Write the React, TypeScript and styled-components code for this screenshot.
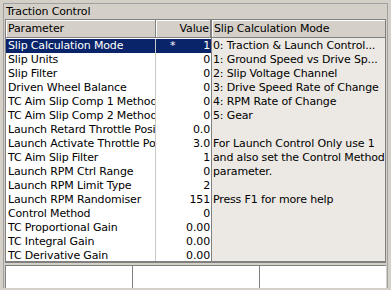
import styled, { createGlobalStyle } from 'styled-components'

const GlobalStyle = createGlobalStyle`
  html, body {
    margin: 0;
    padding: 0;
    background: #d4d0c8;
  }
  body {
    font-family: 'DejaVu Sans', Verdana, sans-serif;
    font-size: 11px;
    letter-spacing: -0.15px;
    color: #000;
  }
  * {
    box-sizing: border-box;
  }
`

const Window = styled.div`
  width: 391px;
  height: 290px;
  padding: 3px 3px 2px 3px;
  display: flex;
  overflow: hidden;
`

const Frame = styled.div`
  flex: 1;
  display: flex;
  flex-direction: column;
  border: 1px solid #a0a0a0;
  border-bottom: none;
  padding: 0 1px;
  min-width: 0;
`

const Title = styled.div`
  height: 15px;
  line-height: 15px;
  padding-left: 1px;
  white-space: nowrap;
`

const Main = styled.div`
  display: flex;
  height: 244px;
`

const ListPanel = styled.div`
  width: 206px;
  display: flex;
  flex-direction: column;
  border-top: 1px solid #808080;
  border-left: 1px solid #808080;
  border-bottom: 2px solid #808080;
  overflow: hidden;
`

const HeaderRow = styled.div`
  display: grid;
  grid-template-columns: 150px 55px;
  height: 18px;
  flex-shrink: 0;
`

const HeaderCell = styled.div<{ $align?: 'left' | 'right' }>`
  background: #d4d0c8;
  border-right: 1px solid #808080;
  border-bottom: 1px solid #808080;
  box-shadow: inset 1px 1px 0 #fff;
  line-height: 17px;
  padding: 0 ${({ $align }) => ($align === 'right' ? '1px' : '0')} 0 2px;
  text-align: ${({ $align }) => $align ?? 'left'};
  white-space: nowrap;
  overflow: hidden;
`

const ListBody = styled.div`
  flex: 1;
  background: #fff;
  padding-top: 1px;
  overflow: hidden;
`

const Row = styled.div<{ $selected?: boolean }>`
  display: grid;
  grid-template-columns: 150px 55px;
  height: 14px;
  line-height: 14px;
  background: ${({ $selected }) => ($selected ? '#0a246a' : 'transparent')};
  color: ${({ $selected }) => ($selected ? '#fff' : '#000')};
`

const NameCell = styled.div`
  padding-left: 2px;
  white-space: nowrap;
  overflow: hidden;
  border-right: 1px solid #c8c8c8;
`

const ValueCell = styled.div`
  display: flex;
  justify-content: space-between;
  padding: 0 1px 0 14px;
  white-space: nowrap;
`

const HelpPanel = styled.div`
  flex: 1;
  display: flex;
  flex-direction: column;
  border-top: 1px solid #808080;
  border-left: 1px solid #808080;
  border-right: 1px solid #808080;
  border-bottom: 2px solid #808080;
  min-width: 0;
`

const HelpHeader = styled(HeaderCell)`
  height: 18px;
  flex-shrink: 0;
  border-right: none;
`

const HelpBody = styled.div`
  flex: 1;
  background: #ece9e4;
  padding: 1px 0 0 1px;
  overflow: hidden;
`

const HelpLine = styled.div`
  height: 14px;
  line-height: 14px;
  white-space: nowrap;
  overflow: hidden;
`

const StatusBar = styled.div`
  margin-top: 2px;
  height: 23px;
  display: grid;
  grid-template-columns: 126px 126px 1fr;
  column-gap: 1px;
  background: #808080;
  border-top: 1px solid #808080;
  border-left: 1px solid #808080;
`

const StatusCell = styled.div`
  background: #fff;
`

type Param = {
  name: string
  value: string
  marker?: string
}

const params: Param[] = [
  { name: 'Slip Calculation Mode', value: '1', marker: '*' },
  { name: 'Slip Units', value: '0' },
  { name: 'Slip Filter', value: '0' },
  { name: 'Driven Wheel Balance', value: '0' },
  { name: 'TC Aim Slip Comp 1 Method', value: '0' },
  { name: 'TC Aim Slip Comp 2 Method', value: '0' },
  { name: 'Launch Retard Throttle Position', value: '0.0' },
  { name: 'Launch Activate Throttle Position', value: '3.0' },
  { name: 'TC Aim Slip Filter', value: '1' },
  { name: 'Launch RPM Ctrl Range', value: '0' },
  { name: 'Launch RPM Limit Type', value: '2' },
  { name: 'Launch RPM Randomiser', value: '151' },
  { name: 'Control Method', value: '0' },
  { name: 'TC Proportional Gain', value: '0.00' },
  { name: 'TC Integral Gain', value: '0.00' },
  { name: 'TC Derivative Gain', value: '0.00' },
]

const helpLines = [
  '0: Traction & Launch Control...',
  '1: Ground Speed vs Drive Sp...',
  '2: Slip Voltage Channel',
  '3: Drive Speed Rate of Change',
  '4: RPM Rate of Change',
  '5: Gear',
  '',
  'For Launch Control Only use 1',
  'and also set the Control Method',
  'parameter.',
  '',
  'Press F1 for more help',
]

function App() {
  return (
    <>
      <GlobalStyle />
      <Window>
        <Frame>
          <Title>Traction Control</Title>
          <Main>
            <ListPanel>
              <HeaderRow>
                <HeaderCell>Parameter</HeaderCell>
                <HeaderCell $align="right">Value</HeaderCell>
              </HeaderRow>
              <ListBody>
                {params.map((p, i) => (
                  <Row key={p.name} $selected={i === 0}>
                    <NameCell>{p.name}</NameCell>
                    <ValueCell>
                      <span>{p.marker ?? ''}</span>
                      <span>{p.value}</span>
                    </ValueCell>
                  </Row>
                ))}
              </ListBody>
            </ListPanel>
            <HelpPanel>
              <HelpHeader>Slip Calculation Mode</HelpHeader>
              <HelpBody>
                {helpLines.map((line, i) => (
                  <HelpLine key={i}>{line || '\u00a0'}</HelpLine>
                ))}
              </HelpBody>
            </HelpPanel>
          </Main>
          <StatusBar>
            <StatusCell />
            <StatusCell />
            <StatusCell />
          </StatusBar>
        </Frame>
      </Window>
    </>
  )
}

export default App
